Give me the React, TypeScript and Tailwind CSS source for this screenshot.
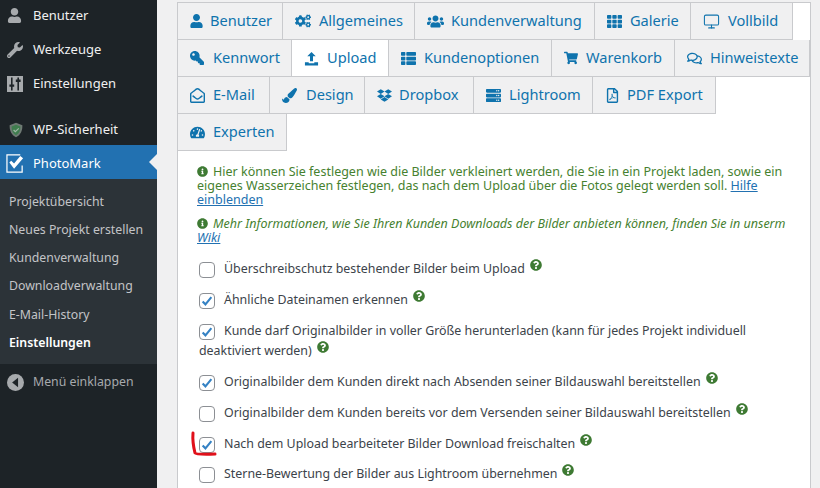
import type { ReactNode } from 'react';
import {
  FaUser, FaWrench, FaCogs, FaUsers, FaTh, FaThList, FaKey, FaShoppingCart, FaRegComments,
  FaRegEnvelopeOpen, FaPaintBrush, FaDropbox, FaServer, FaRegFilePdf, FaTachometerAlt,
  FaInfoCircle, FaQuestionCircle,
} from 'react-icons/fa';
import { Monitor } from 'lucide-react';

function SlidersIcon() {
  return (
    <svg viewBox="0 0 20 20" className="w-[16px] h-[16px]">
      <rect x="0" y="0" width="20" height="20" fill="#a7aaad" />
      <path d="M6 2v16M14 2v16" stroke="#1d2327" strokeWidth="2" />
      <path d="M3 12h6M11 6h6" stroke="#1d2327" strokeWidth="3" />
    </svg>
  );
}

function ShieldIcon() {
  return (
    <svg viewBox="0 0 20 20" className="w-[16px] h-[18px]">
      <path d="M10 1l8 3c0 7-2 12-8 15C4 16 2 11 2 4z" fill="#6f7a74" />
      <path d="M10 3.500l5.500 2c0 5-1.500 8.500-5.500 11-4-2.500-5.500-6-5.500-11z" fill="#3f7d4e" />
      <path d="M7 10l2.200 2.200L13.500 8" fill="none" stroke="#9fb8a5" strokeWidth="1.500" />
    </svg>
  );
}

function CheckLogo() {
  return (
    <svg viewBox="0 0 20 20" className="w-[19px] h-[19px]">
      <path d="M15 1H1v18h16v-7" fill="none" stroke="#fff" strokeWidth="1.300" />
      <path d="M3.500 9l2-2 3 3L15 2l3 2.500-9.500 11z" fill="#fff" />
    </svg>
  );
}

function CollapseIcon() {
  return (
    <svg viewBox="0 0 20 20" className="w-[17px] h-[17px]">
      <circle cx="10" cy="10" r="10" fill="#a7aaad" />
      <path d="M13 4.500v11L6 10z" fill="#1d2327" />
    </svg>
  );
}

function UploadIcon() {
  return (
    <svg viewBox="0 0 16 16" className="w-[15px] h-[15px]" fill="currentColor">
      <path d="M8 1l4.500 4.500H9.600V11H6.400V5.500H3.500z" />
      <path d="M1 12h4v1h6v-1h4v3.500H1z" />
    </svg>
  );
}

const menuTop = [
  { label: 'Benutzer', icon: <FaUser className="w-[15px] h-[15px] text-[#a7aaad]" /> },
  { label: 'Werkzeuge', icon: <FaWrench className="w-[16px] h-[16px] text-[#a7aaad]" /> },
  { label: 'Einstellungen', icon: <SlidersIcon /> },
];

const subItems = ['Projektübersicht', 'Neues Projekt erstellen', 'Kundenverwaltung', 'Downloadverwaltung', 'E-Mail-History'];

const ic = 'w-[15px] h-[15px]';

const tabs: { label: string; icon: ReactNode; w: string; box?: string; active?: boolean }[] = [
  { label: 'Benutzer', icon: <FaUser className="w-[13px] h-[14px]" />, w: 'w-[105px]', box: 'w-[20px]' },
  { label: 'Allgemeines', icon: <FaCogs className="w-[16px] h-[16px]" />, w: 'w-[132px]', box: 'w-[24px]' },
  { label: 'Kundenverwaltung', icon: <FaUsers className="w-[17px] h-[17px]" />, w: 'w-[180px]', box: 'w-[24px]' },
  { label: 'Galerie', icon: <FaTh className={ic} />, w: 'w-[96px]' },
  { label: 'Vollbild', icon: <Monitor className="w-[17px] h-[17px]" strokeWidth={1.500} />, w: 'w-[102px]', box: 'w-[25px]' },
  { label: 'Kennwort', icon: <FaKey className="w-[14px] h-[14px] -scale-x-100" />, w: 'w-[114px]' },
  { label: 'Upload', icon: <UploadIcon />, w: 'w-[97px]', active: true },
  { label: 'Kundenoptionen', icon: <FaThList className={ic} />, w: 'w-[163px]' },
  { label: 'Warenkorb', icon: <FaShoppingCart className="w-[14px] h-[14px]" />, w: 'w-[123px]', box: 'w-[22px]' },
  { label: 'Hinweistexte', icon: <FaRegComments className={ic} />, w: 'w-[135px]' },
  { label: 'E-Mail', icon: <FaRegEnvelopeOpen className={ic} />, w: 'w-[92px]' },
  { label: 'Design', icon: <FaPaintBrush className={ic} />, w: 'w-[95px]', box: 'w-[24px]' },
  { label: 'Dropbox', icon: <FaDropbox className={ic} />, w: 'w-[109px]', box: 'w-[22px]' },
  { label: 'Lightroom', icon: <FaServer className={ic} />, w: 'w-[119px]' },
  { label: 'PDF Export', icon: <FaRegFilePdf className={ic} />, w: 'w-[123px]', box: 'w-[22px]' },
  { label: 'Experten', icon: <FaTachometerAlt className={ic} />, w: 'w-[109px]' },
];

function Help() {
  return <FaQuestionCircle className="relative -top-[5px] inline-block w-[12px] h-[12px] text-[#3e7a33] ml-[5px]" />;
}

function Check({ label, checked, mt }: { label: ReactNode; checked?: boolean; mt: string }) {
  return (
    <div className={`${mt} text-[12.4px] leading-[20px] text-[#3c434a]`}>
      <span className="inline-flex align-middle w-[16px] h-[16px] mr-[9px] rounded-[4px] border border-[#8c8f94] bg-white items-center justify-center">
        {checked && (
          <svg viewBox="0 0 16 16" className="w-[14px] h-[14px]">
            <path d="M3 8.500l3.200 3.300L13 3.500" fill="none" stroke="#3582c4" strokeWidth="2.400" />
          </svg>
        )}
      </span>
      {label}
    </div>
  );
}

export default function App() {
  return (
    <div className="relative flex w-[820px] h-[488px] overflow-hidden bg-[#f0f0f1] font-['Noto_Sans',sans-serif]">
      <aside className="w-[157px] shrink-0 bg-[#1d2327] -mt-[3px]">
        {menuTop.map((m) => (
          <div key={m.label} className="h-[34px] pt-[3px] flex items-center text-[13px] text-[#f0f0f1]">
            <span className="w-[33px] pl-[7px] flex items-center">{m.icon}</span>
            {m.label}
          </div>
        ))}
        <div className="h-[12px]" />
        <div className="h-[34px] pt-[3px] flex items-center text-[13px] text-[#f0f0f1]">
          <span className="w-[33px] pl-[8px] flex items-center"><ShieldIcon /></span>
          WP-Sicherheit
        </div>
        <div className="relative h-[34px] pt-[3px] bg-[#2271b1] flex items-center text-[13px] text-white">
          <span className="w-[33px] pl-[6px] flex items-center"><CheckLogo /></span>
          PhotoMark
          <span className="absolute right-0 top-[9px] border-y-[8px] border-y-transparent border-r-[8px] border-r-[#f0f0f1]" />
        </div>
        <div className="bg-[#2c3338] pt-[9px] h-[185px] text-[12.3px] text-[#c3c4c7]">
          {subItems.map((s) => (
            <div key={s} className="h-[28.2px] pl-[9px] flex items-center">{s}</div>
          ))}
          <div className="h-[28.2px] pl-[9px] flex items-center text-white font-semibold">Einstellungen</div>
        </div>
        <div className="h-[36px] flex items-center text-[12.3px] text-[#a7aaad]">
          <span className="w-[33px] pl-[7px] flex items-center"><CollapseIcon /></span>
          Menü einklappen
        </div>
      </aside>

      <main className="flex-1 pl-[20px] pr-[9px] pt-[2px]">
        <div className="bg-white border border-[#c9cacd] h-[600px]">
          <div className="flex flex-wrap">
            {tabs.map((t) => (
              <div
                key={t.label}
                className={`${t.w} h-[37px] pl-[12px] flex items-center border-r border-b border-[#c9cacd] text-[14.6px] text-[#0f73ad] ${t.active ? 'bg-white' : 'bg-[#f0f0f1]'}`}
              >
                <span className={`${t.box ?? 'w-[23px]'} shrink-0 flex items-center`}>{t.icon}</span>
                {t.label}
              </div>
            ))}
          </div>

          <div className="pl-[19px] pr-[18px] pt-[14px]">
            <p className="text-[12.5px] leading-[14px] text-[#46812f]">
              <FaInfoCircle className="inline-block w-[11px] h-[11px] mr-[5px] align-[-1px] text-[#3e7a33]" />
              Hier können Sie festlegen wie die Bilder verkleinert werden, die Sie in ein Projekt laden, sowie ein eigenes Wasserzeichen festlegen, das nach dem Upload über die Fotos gelegt werden soll. <span className="underline text-[#2271b1]">Hilfe einblenden</span>
            </p>
            <p className="mt-[10px] text-[12.5px] leading-[14px] italic text-[#46812f]">
              <FaInfoCircle className="inline-block w-[11px] h-[11px] mr-[5px] align-[-1px] text-[#3e7a33]" />
              Mehr Informationen, wie Sie Ihren Kunden Downloads der Bilder anbieten können, finden Sie in unserm <span className="underline text-[#2271b1]">Wiki</span>
            </p>
            <div className="pl-[2px]">
              <Check mt="mt-[14px]" label={<>Überschreibschutz bestehender Bilder beim Upload<Help /></>} />
              <Check mt="mt-[11px]" checked label={<>Ähnliche Dateinamen erkennen<Help /></>} />
              <Check mt="mt-[11px]" checked label={<>Kunde darf Originalbilder in voller Größe herunterladen (kann für jedes Projekt individuell deaktiviert werden)<Help /></>} />
              <Check mt="mt-[11px]" checked label={<>Originalbilder dem Kunden direkt nach Absenden seiner Bildauswahl bereitstellen<Help /></>} />
              <Check mt="mt-[11px]" label={<>Originalbilder dem Kunden bereits vor dem Versenden seiner Bildauswahl bereitstellen<Help /></>} />
              <Check mt="mt-[11px]" checked label={<>Nach dem Upload bearbeiteter Bilder Download freischalten<Help /></>} />
              <Check mt="mt-[10px]" label={<>Sterne-Bewertung der Bilder aus Lightroom übernehmen<Help /></>} />
            </div>
          </div>
        </div>
      </main>

      <svg className="absolute left-[188px] top-[430px] w-[32px] h-[28px]" viewBox="0 0 32 28">
        <path d="M5 3c-.500 6 0 12 2 20 1 1.500 8 1.500 20 1" fill="none" stroke="#e0101a" strokeWidth="3" strokeLinecap="round" />
      </svg>
    </div>
  );
}
